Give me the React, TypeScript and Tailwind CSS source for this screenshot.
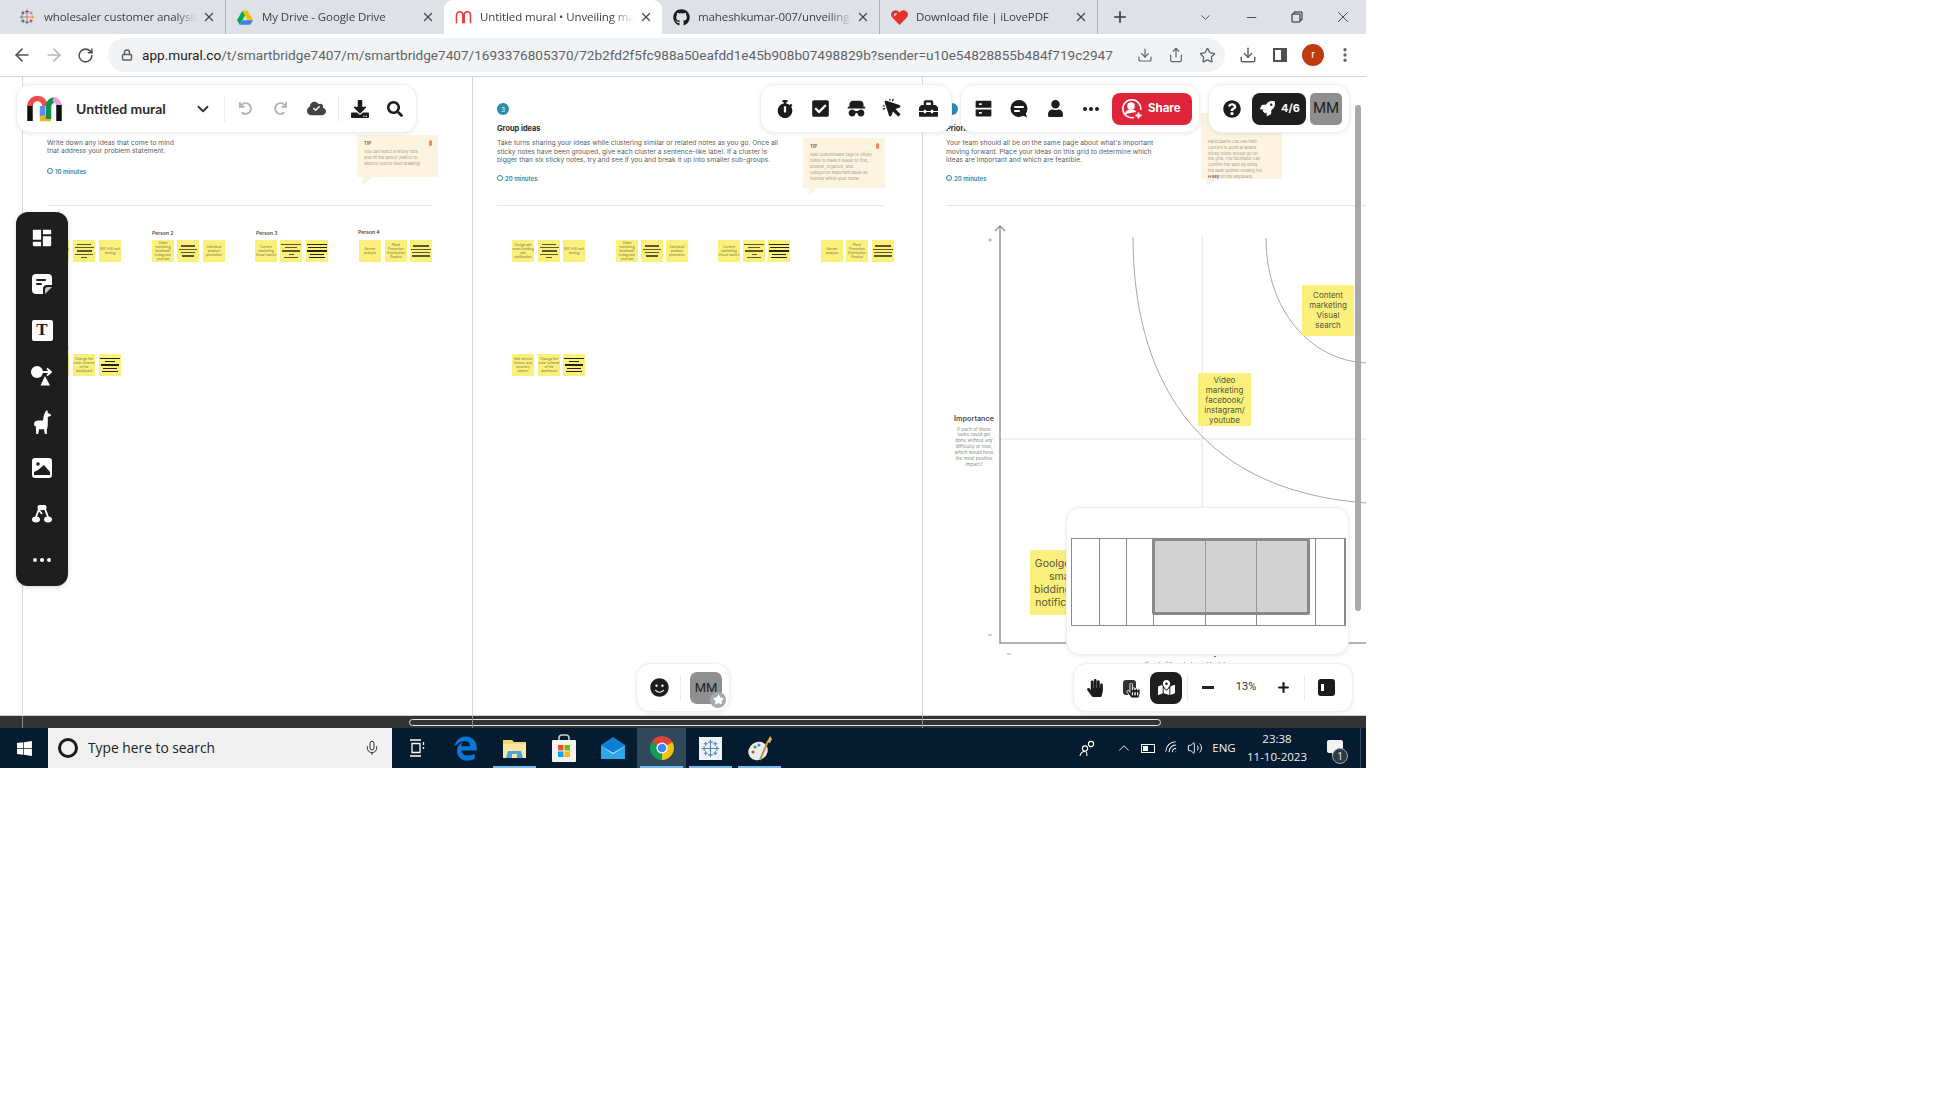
import {
  ArrowLeft,
  ArrowRight,
  RotateCw,
  Lock,
  Star,
  Share,
  Download,
  EllipsisVertical,
  ChevronDown,
  Minus,
  X,
  Plus,
  Mic,
  ChevronUp,
  Volume2,
  Wifi,
} from "lucide-react";
import {
  FaStopwatch,
  FaCheckSquare,
  FaToolbox,
  FaUser,
  FaQuestionCircle,
  FaRocket,
  FaHandPaper,
  FaHandPointer,
  FaMapMarkedAlt,
  FaSmile,
  FaStar,
  FaSearch,
  FaGithub,
  FaWindows,
  FaUndo,
  FaRedo,
  FaCloud,
  FaCheck,
  FaDownload,
  FaCommentAlt,
} from "react-icons/fa";
import { FaEdgeLegacy } from "react-icons/fa6";
import { PiCursorClickFill } from "react-icons/pi";
import { RiSpyFill, RiServerFill, RiLayoutMasonryFill } from "react-icons/ri";

const URL_TEXT =
  "/t/smartbridge7407/m/smartbridge7407/1693376805370/72b2fd2f5fc988a50eafdd1e45b908b07498829b?sender=u10e54828855b484f719c2947";

function TableauMark({ size = 16, tone }: { size?: number; tone?: string }) {
  const crosses = [
    [12, 12, 5, "#e8762d"],
    [12, 4, 3, "#c72035"],
    [12, 20, 3, "#5b6591"],
    [4, 12, 3, "#59879b"],
    [20, 12, 3, "#eb912b"],
    [6, 6, 2.5, "#1f457e"],
    [18, 6, 2.5, "#7099a6"],
    [6, 18, 2.5, "#1f457e"],
    [18, 18, 2.5, "#c72035"],
  ] as const;
  return (
    <svg width={size} height={size} viewBox="0 0 24 24">
      {crosses.map(([x, y, r, c], i) => (
        <path key={i} d={`M${x - r} ${y}H${x + r}M${x} ${y - r}V${y + r}`} stroke={tone ?? c} strokeWidth="1.4" />
      ))}
    </svg>
  );
}

function DriveMark() {
  return (
    <svg width="16" height="15" viewBox="0 0 24 22">
      <path d="M8 1h8l8 14h-8z" fill="#fbbc04" />
      <path d="M8 1L0 15l4 7 8-14z" fill="#00a94f" />
      <path d="M4 22h16l4-7H8z" fill="#3f7ee8" />
    </svg>
  );
}

function MuralFavicon() {
  return (
    <svg width="17" height="14" viewBox="0 0 24 20" fill="none" stroke="#e2403f" strokeWidth="2.2">
      <path d="M2 19V7a4.5 4.5 0 0 1 9 0v11h2V7a4.5 4.5 0 0 1 9 0v12" />
    </svg>
  );
}

function PdfHeart() {
  return (
    <svg width="17" height="15" viewBox="0 0 17 15">
      <path d="M8.5 15L1.2 7.6C-.6 5.6-.2 2.4 2 1c2.200-1.300 4.800-.6 6.500 1.500C10.200.4 12.800-.3 15 1c2.200 1.400 2.600 4.600.8 6.600z" fill="#e5322d" />
      <path d="M3 3.500h3.500l-3.200 3z" fill="#fff" opacity=".85" />
    </svg>
  );
}

function MuralLogo() {
  return (
    <svg width="36" height="27" viewBox="0 0 36 27" fill="none" strokeWidth="5.5">
      <path d="M3 26V10" stroke="#111" />
      <path d="M3 11a7.5 7.5 0 0 1 15 0" stroke="#ee4a50" />
      <path d="M15.500 11V23" stroke="#5b8def" />
      <path d="M13 23.500H24" stroke="#f5b225" />
      <path d="M21.500 24V11a5 6.500 0 0 1 7-5" stroke="#10924d" />
      <path d="M26 4.500a6.500 7 0 0 1 6 6.500" stroke="#e79be8" />
      <path d="M32 10V26" stroke="#111" />
    </svg>
  );
}

function ChromeLogo({ size = 24 }: { size?: number }) {
  return (
    <svg width={size} height={size} viewBox="-12 -12 24 24">
      <path d="M0 0L-10.390 -6A12 12 0 0 1 10.390 -6Z" fill="#db4437" />
      <path d="M0 0L10.390 -6A12 12 0 0 1 0 12Z" fill="#f4c20d" />
      <path d="M0 0L0 12A12 12 0 0 1 -10.390 -6Z" fill="#0f9d58" />
      <circle r="5.600" fill="#fff" />
      <circle r="4.300" fill="#4285f4" />
    </svg>
  );
}

function StoreIcon() {
  return (
    <svg width="24" height="28" viewBox="0 0 24 28">
      <path d="M7 8V4a3 3 0 0 1 3-3h4a3 3 0 0 1 3 3v4" fill="none" stroke="#c9ced3" strokeWidth="1.6" />
      <rect y="6" width="24" height="22" rx="1" fill="#f4f4f4" />
      <rect x="6" y="11" width="5.500" height="5.500" fill="#f25022" />
      <rect x="12.500" y="11" width="5.500" height="5.500" fill="#7fba00" />
      <rect x="6" y="17.500" width="5.500" height="5.500" fill="#00a4ef" />
      <rect x="12.500" y="17.500" width="5.500" height="5.500" fill="#ffb900" />
    </svg>
  );
}

function MailIcon() {
  return (
    <svg width="24" height="22" viewBox="0 0 24 22">
      <path d="M0 8L12 0l12 8v14H0z" fill="#0f7fd6" />
      <path d="M0 8l12 8 12-8v14H0z" fill="#2ba7ea" />
      <path d="M0 9l12 7 12-7-12 8z" fill="#fff" />
    </svg>
  );
}

function ExplorerIcon() {
  return (
    <svg width="23" height="19" viewBox="0 0 23 19">
      <path d="M0 1h9l2 2h12v16H0z" fill="#f3d673" />
      <path d="M0 5h23v14H0z" fill="#fbe6a2" />
      <path d="M5 12h13l2 7H3z" fill="#4da3da" />
      <path d="M9 15h5v4H9z" fill="#fbe6a2" />
    </svg>
  );
}

function PaintIcon() {
  return (
    <svg width="24" height="27" viewBox="0 0 24 27">
      <ellipse cx="10" cy="16" rx="10" ry="9" fill="#e9edf0" transform="rotate(-35 10 16)" />
      <circle cx="5" cy="17" r="1.600" fill="#d0473d" />
      <circle cx="7" cy="12" r="1.600" fill="#3aa14a" />
      <circle cx="11" cy="10" r="1.600" fill="#3b8ee0" />
      <path d="M12 25L20 6" stroke="#c6923f" strokeWidth="2" />
      <path d="M19 7l3-6 2 3-2 4z" fill="#e3b35a" />
    </svg>
  );
}

function StickyIcon() {
  return (
    <svg width="20" height="20" viewBox="0 0 20 20">
      <path d="M4 0h12a4 4 0 0 1 4 4v7h-5a4 4 0 0 0-4 4v5H4a4 4 0 0 1-4-4V4a4 4 0 0 1 4-4z" fill="#fff" />
      <path d="M13 20v-4a3 3 0 0 1 3-3h4z" fill="#fff" opacity=".75" />
      <rect x="4" y="5" width="10" height="2" rx="1" fill="#1e1e1e" />
      <rect x="4" y="9" width="6" height="2" rx="1" fill="#1e1e1e" />
    </svg>
  );
}

function ShapesIcon() {
  return (
    <svg width="22" height="20" viewBox="0 0 22 20" fill="#fff">
      <circle cx="6" cy="6" r="6" />
      <path d="M9.500 19.500L14 10l5 9.500z" />
      <path d="M11 6h8M16 2.500L20 6l-4 3.500" fill="none" stroke="#fff" strokeWidth="1.8" />
    </svg>
  );
}

function LlamaIcon() {
  return (
    <svg width="19" height="24" viewBox="0 0 19 25" fill="#fff">
      <path d="M13 1L14.500 0L15 3L18 4.500L18.500 6L15 7.200L15 15C15 17 14.500 19 14 20L14 25L12 25L11 20L6 20L5 25L3 25L2.500 17C1 17 0.200 15 1 13C2 11 5 11 7 11L10 11L11 5Z" />
    </svg>
  );
}

function ImageIcon() {
  return (
    <svg width="20" height="20" viewBox="0 0 20 20">
      <rect width="20" height="20" rx="3" fill="#fff" />
      <circle cx="6" cy="6" r="1.800" fill="#1e1e1e" />
      <path d="M2 17v-3l4-2 6-5 6 7v3z" fill="#1e1e1e" />
    </svg>
  );
}

function DiagramIcon() {
  return (
    <svg width="20" height="18" viewBox="0 0 20 18" fill="#fff">
      <rect x="5.500" y="0" width="9" height="5" rx="2" />
      <path d="M7 4L4 12M13 4l3 8M7 5l3 4" stroke="#fff" strokeWidth="1.8" />
      <ellipse cx="4" cy="14.500" rx="4" ry="3" />
      <ellipse cx="16" cy="14.500" rx="4" ry="3" />
    </svg>
  );
}

function ChatIcon() {
  return (
    <svg width="18" height="18" viewBox="0 0 18 18">
      <circle cx="9" cy="8.500" r="8.500" fill="#1c1c1c" />
      <path d="M12 15l5 2.500-1.500-5z" fill="#1c1c1c" />
      <rect x="4" y="6" width="10" height="2" rx="1" fill="#fff" />
      <rect x="4" y="10" width="6" height="2" rx="1" fill="#fff" />
    </svg>
  );
}

function ShareIcon() {
  return (
    <svg width="22" height="22" viewBox="0 0 22 22" fill="none" stroke="#fff" strokeWidth="1.5">
      <path d="M13 19.500A9 9 0 1 1 19.700 12" />
      <circle cx="10" cy="8" r="3" fill="#fff" />
      <path d="M4.500 16c1-3 3-4 5.500-4s3.500.5 4.500 2" fill="#fff" />
      <path d="M17.500 14.500v6M14.500 17.500h6" strokeWidth="1.8" />
    </svg>
  );
}

function ToolDot() {
  return (
    <div className="flex gap-[2px]">
      <div className="w-[4px] h-[4px] rounded-full bg-[#1c1c1c]" />
      <div className="w-[4px] h-[4px] rounded-full bg-[#1c1c1c]" />
      <div className="w-[4px] h-[4px] rounded-full bg-[#1c1c1c]" />
    </div>
  );
}

const TABS = [
  { title: "wholesaler customer analysis", icon: <TableauMark />, sep: true },
  { title: "My Drive - Google Drive", icon: <DriveMark />, sep: false },
  { title: "Untitled mural • Unveiling market", icon: <MuralFavicon />, active: true, sep: false },
  { title: "maheshkumar-007/unveiling-market", icon: <FaGithub className="text-[17px] text-[#1c1c1c]" />, sep: true },
  { title: "Download file | iLovePDF", icon: <PdfHeart />, sep: true },
];

function TabStrip() {
  return (
    <div className="h-[34px] bg-[#dee1e6] flex items-end pl-[8px] font-['Open_Sans',sans-serif] text-[11.5px] text-[#3c4043]">
      {TABS.map((t) => (
        <div
          key={t.title}
          className={`w-[218px] h-[34px] flex items-center pl-[10px] pr-[9px] ${
            t.active ? "bg-white rounded-t-[9px]" : t.sep ? "border-r border-[#9aa0a6]/70" : ""
          }`}
        >
          <div className="w-[18px] flex justify-center shrink-0">{t.icon}</div>
          <div className="ml-[8px] w-[154px] overflow-hidden whitespace-nowrap tracking-[-0.1px] [mask-image:linear-gradient(to_right,black_85%,transparent)]">
            {t.title}
          </div>
          <X size={14} strokeWidth={2.2} className="ml-auto shrink-0 text-[#45484c]" />
        </div>
      ))}
      <div className="w-[44px] h-[34px] flex items-center justify-center">
        <Plus size={18} strokeWidth={2.2} className="text-[#3c4043]" />
      </div>
      <div className="flex-1 h-[34px] flex items-center justify-end text-[#3c4043]">
        <ChevronDown size={15} strokeWidth={1.4} className="mr-[31px]" />
        <Minus size={15} strokeWidth={1.4} className="mr-[32px]" />
        <svg width="12" height="12" viewBox="0 0 12 12" fill="none" stroke="#202124" className="mr-[31px]">
          <path d="M3 3V1h8v8H9M1 3h8v8H1z" />
        </svg>
        <X size={18} strokeWidth={1.2} className="mr-[14px]" />
      </div>
    </div>
  );
}

function AddressBar() {
  return (
    <div className="h-[43px] bg-white border-b border-[#d5d7db] flex items-center font-['Roboto',sans-serif] text-[#5f6368]">
      <div className="w-[108px] flex items-center pl-[12px] gap-[12px] shrink-0">
        <ArrowLeft size={20} strokeWidth={2} className="text-[#4d5156]" />
        <ArrowRight size={20} strokeWidth={2} className="text-[#b4b7bb]" />
        <RotateCw size={17} strokeWidth={2.2} className="ml-[1px] text-[#4d5156]" />
      </div>
      <div className="w-[1117px] h-[34px] rounded-full bg-[#f1f3f4] flex items-center pl-[13px] shrink-0">
        <Lock size={12} strokeWidth={3} className="text-[#5f6368]" />
        <div className="ml-[9px] w-[975px] whitespace-nowrap overflow-hidden text-[13.6px]">
          <span className="text-[#202124]">app.mural.co</span>
          {URL_TEXT}
        </div>
        <div className="ml-auto flex items-center gap-[15px] pr-[9px]">
          <Download size={16} strokeWidth={1.8} />
          <Share size={16} strokeWidth={1.8} />
          <Star size={17} strokeWidth={1.8} />
        </div>
      </div>
      <div className="flex-1 flex items-center pl-[14px]">
        <Download size={18} strokeWidth={2} />
        <div className="ml-[16px] w-[14px] h-[14px] border-[2px] border-[#4d5156] border-r-[6px]" />
        <div className="ml-[15px] w-[22px] h-[22px] rounded-full bg-[#bf3a0d] text-white text-[11px] flex items-center justify-center">
          r
        </div>
        <EllipsisVertical size={18} strokeWidth={2.4} className="ml-[12px]" />
      </div>
    </div>
  );
}

type StickyProps = {
  x: number;
  y: number;
  text?: string;
  lines?: number[];
  dark?: boolean;
};

function Sticky({ x, y, text, lines, dark }: StickyProps) {
  return (
    <div
      className="absolute w-[22px] h-[22px] bg-[#fbf07c] flex flex-col items-center justify-center text-center text-[3.3px] leading-[4px] text-[#77764a] overflow-hidden"
      style={{ left: x, top: y - 77 }}
    >
      {text}
      {lines && (
        <div className="flex flex-col items-center gap-[2px]">
          {lines.map((w, i) => (
            <div
              key={i}
              className={dark ? "h-[1.4px] bg-[#24230f]" : "h-[1.3px] bg-[#5b5a2e]"}
              style={{ width: w }}
            />
          ))}
        </div>
      )}
    </div>
  );
}

// the note contents repeat between the first two sections
const L_A = [14, 19, 15, 18, 6];
const L_B = [14, 18, 14, 12];
const L_C = [20, 12, 18, 5, 14];
const L_D = [20, 19, 20, 14, 16];
const L_E = [16, 20, 18, 18];
const L_F = [20, 10, 18, 14, 16];

const SEO = "SEO A/B split testing";
const VIDEO = "Video marketing facebook/ instagram/ youtube";
const INDIVIDUAL = "Individual product promotion";
const CONTENT = "Content marketing Visual search";
const BANNER = "Banner analysis";
const PLACE = "Place Promotion Distribution Product";
const GOOGLE = "Goolge ads smart bidding ads notification";
const HISTORY = "Add version history and recovery options";
const COLOR = "Change the color scheme of the dashboard";

function stickyRow(xs: number[], y: number): StickyProps[] {
  const c: Omit<StickyProps, "x" | "y">[] = [
    { text: GOOGLE },
    { lines: L_A },
    { text: SEO },
    { text: VIDEO },
    { lines: L_B },
    { text: INDIVIDUAL },
    { text: CONTENT },
    { lines: L_C },
    { lines: L_D, dark: true },
    { text: BANNER },
    { text: PLACE },
    { lines: L_E },
  ];
  return xs.map((x, i) => ({ ...c[i], x, y }));
}

const COLS_1 = [47, 73, 99, 152, 177, 203, 255, 280, 306, 359, 385, 410];
const COLS_2 = [512, 538, 563, 616, 641, 666, 718, 743, 768, 821, 846, 872];

const STICKIES: StickyProps[] = [
  ...stickyRow(COLS_1, 240),
  ...stickyRow(COLS_2, 240),
  { x: 47, y: 354, text: HISTORY },
  { x: 73, y: 354, text: COLOR },
  { x: 99, y: 354, lines: L_F, dark: true },
  { x: 512, y: 354, text: HISTORY },
  { x: 538, y: 354, text: COLOR },
  { x: 563, y: 354, lines: L_F, dark: true },
];

const PERSONS = [
  { name: "Person 1", x: 47, y: 233 },
  { name: "Person 2", x: 152, y: 233 },
  { name: "Person 3", x: 256, y: 233 },
  { name: "Person 4", x: 358, y: 232 },
  { name: "Person 5", x: 47, y: 347 },
];

function Duration({ label, x }: { label: string; x: number }) {
  return (
    <div
      className="absolute h-[8px] flex items-center gap-[2px] text-[6px] font-semibold text-[#2a8bab] whitespace-nowrap"
      style={{ left: x, top: label === "10 minutes" ? 90 : 97 }}
    >
      <span className="w-[6px] h-[6px] rounded-full border border-[#2a8bab]" />
      {label}
    </div>
  );
}

function Tip({ x, y, w, h, lines }: { x: number; y: number; w: number; h: number; lines: React.ReactNode[] }) {
  return (
    <div
      className="absolute bg-[#fdf3df] pl-[7px] pt-[6px] text-[#a09a8b]"
      style={{ left: x, top: y - 77, width: w, height: h }}
    >
      <div className="text-[4.4px] leading-[5px] font-bold text-[#6d675a]">TIP</div>
      <div className="absolute right-[6px] top-[5px] w-[3.5px] h-[5.5px] rounded-full bg-[#f0885a]" />
      <div className="mt-[3px] text-[4.1px] leading-[5.9px] whitespace-nowrap">
        {lines.map((l, i) => (
          <div key={i} className="h-[5.9px]">{l}</div>
        ))}
      </div>
      <div className="absolute left-[6px] top-full w-0 h-0 border-t-[8px] border-t-[#fdf3df] border-r-[9px] border-r-transparent" />
    </div>
  );
}

function BigSticky({ className, lines, textClass }: { className: string; lines: string[]; textClass: string }) {
  return (
    <div className={`absolute bg-[#fbf07c] flex flex-col items-center justify-center text-center text-[#55553a] whitespace-nowrap ${className} ${textClass}`}>
      {lines.map((l) => (
        <div key={l}>{l}</div>
      ))}
    </div>
  );
}

function Mural() {
  return (
    <div className="relative flex-1 bg-white overflow-hidden font-['Inter',sans-serif]">
      {/* section dividers */}
      <div className="absolute left-[22px] top-0 bottom-0 w-px bg-[#d8d8d8]" />
      <div className="absolute left-[472px] top-0 bottom-0 w-px bg-[#d8d8d8]" />
      <div className="absolute left-[922px] top-0 bottom-0 w-px bg-[#d8d8d8]" />
      <div className="absolute left-[47px] top-[128px] w-[386px] h-px bg-[#e6e6e6]" />
      <div className="absolute left-[497px] top-[128px] w-[386px] h-px bg-[#e6e6e6]" />
      <div className="absolute left-[946px] top-[128px] w-[420px] h-px bg-[#e6e6e6]" />

      {/* section 1 */}
      <div className="absolute left-[47px] top-[62px] text-[6.7px] leading-[8.3px] text-[#5e5e5e] whitespace-nowrap">
        <div>Write down any ideas that come to mind</div>
        <div>that address your problem statement.</div>
      </div>
      <Duration label="10 minutes" x={47} />
      <Tip
        x={357}
        y={135}
        w={81}
        h={42}
        lines={["You can select a sticky note", "and hit the pencil (switch to", "sketch) icon to start drawing!"]}
      />

      {/* section 2 */}
      <div className="absolute left-[497px] top-[26px] w-[12px] h-[12px] rounded-full bg-[#2b8cab] text-white text-[6px] flex items-center justify-center">
        3
      </div>
      <div className="absolute left-[497px] top-[47px] text-[7.4px] leading-[9px] font-bold text-[#2b2b2b]">
        Group ideas
      </div>
      <div className="absolute left-[497px] top-[62px] text-[6.7px] leading-[8.5px] text-[#5e5e5e] whitespace-nowrap">
        <div>Take turns sharing your ideas while clustering similar or related notes as you go. Once all</div>
        <div>sticky notes have been grouped, give each cluster a sentence-like label. If a cluster is</div>
        <div>bigger than six sticky notes, try and see if you and break it up into smaller sub-groups.</div>
      </div>
      <Duration label="20 minutes" x={497} />
      <Tip
        x={803}
        y={138}
        w={82}
        h={50}
        lines={[
          "Add customizable tags to sticky",
          "notes to make it easier to find,",
          "browse, organize, and",
          "categorize important ideas as",
          "themes within your mural.",
        ]}
      />

      {/* section 3 */}
      <div className="absolute left-[946px] top-[26px] w-[12px] h-[12px] rounded-full bg-[#2b8cab]" />
      <div className="absolute left-[946px] top-[47px] text-[7.4px] leading-[9px] font-bold text-[#2b2b2b]">
        Prioritize ideas
      </div>
      <div className="absolute left-[946px] top-[62px] text-[6.7px] leading-[8.5px] text-[#5e5e5e] whitespace-nowrap">
        <div>Your team should all be on the same page about what's important</div>
        <div>moving forward. Place your ideas on this grid to determine which</div>
        <div>ideas are important and which are feasible.</div>
      </div>
      <Duration label="20 minutes" x={946} />
      <Tip
        x={1201}
        y={113}
        w={81}
        h={66}
        lines={[
          "",
          "",
          "Participants can use their",
          "cursors to point at where",
          "sticky notes should go on",
          "the grid. The facilitator can",
          "confirm the spot by using",
          "the laser pointer holding the",
          <span key="h">
            <b className="text-[#6d675a]">H key</b> on the keyboard.
          </span>,
        ]}
      />

      {/* prioritisation chart */}
      <svg className="absolute left-0 top-0" width="1366" height="651" viewBox="0 77 1366 651" fill="none">
        <path d="M1202 236V640M1000 439H1366" stroke="#e4e4e4" />
        <path d="M1133 237C1133 370 1190 490 1366 503M1266 238C1266 310 1310 360 1366 363" stroke="#a9a9a9" />
        <path d="M1000 226V643H1366M995 231L1000 226L1005 231" stroke="#9a9a9a" strokeWidth="1.5" />
        <path d="M988 240h4M990 238v4M988 635h4M1007 654h4" stroke="#a9a9a9" />
        <path d="M1214 656.500h2" stroke="#777" />
      </svg>
      <div className="absolute left-[950px] top-[336px] w-[48px] text-center">
        <div className="text-[7.2px] leading-[12px] font-semibold text-[#4c4c4c]">Importance</div>
        <div className="mt-[1.5px] text-[4.6px] leading-[5.9px] text-[#8c8c8c] whitespace-nowrap">
          <div>If each of these</div>
          <div>tasks could get</div>
          <div>done without any</div>
          <div>difficulty or cost,</div>
          <div>which would have</div>
          <div>the most positive</div>
          <div>impact?</div>
        </div>
      </div>
      <div className="absolute left-[1145px] top-[584px] text-[5px] font-semibold text-[#6e6e6e] whitespace-nowrap">
        If each of these tasks could get done
      </div>
      <BigSticky
        className="left-[1302px] top-[208px] w-[52px] h-[51px] pb-[2px]"
        textClass="text-[8px] leading-[10px]"
        lines={["Content", "marketing", "Visual", "search"]}
      />
      <BigSticky
        className="left-[1198px] top-[296px] w-[53px] h-[53px]"
        textClass="text-[8px] leading-[10px]"
        lines={["Video", "marketing", "facebook/", "instagram/", "youtube"]}
      />
      <BigSticky
        className="left-[1030px] top-[473px] w-[66px] h-[65px]"
        textClass="text-[10.5px] leading-[13px]"
        lines={["Goolge ads", "smart", "bidding ads", "notification"]}
      />

      {/* tiny notes */}
      {PERSONS.map((p) => (
        <div
          key={p.name}
          className="absolute text-[5px] leading-[6px] font-semibold text-[#4c4c4c] whitespace-nowrap"
          style={{ left: p.x, top: p.y - 80 }}
        >
          {p.name}
        </div>
      ))}
      {STICKIES.map((s) => (
        <Sticky key={`${s.x}-${s.y}`} {...s} />
      ))}

      {/* page scrollbars */}
      <div className="absolute left-[1355px] top-[28px] w-[6px] h-[506px] rounded-full bg-[#a8a8a8]" />
      <div className="absolute left-0 right-0 bottom-0 h-[13px] bg-[#333] border-t border-[#cfcfcf] flex items-center">
        <div className="ml-[409px] w-[752px] h-[7px] rounded-full border border-[#e4e4e4]" />
      </div>
      <div className="absolute left-[22px] bottom-0 w-px h-[12px] bg-[#8a8a8a]" />
      <div className="absolute left-[472px] bottom-0 w-px h-[12px] bg-[#8a8a8a]" />
      <div className="absolute left-[922px] bottom-0 w-px h-[12px] bg-[#8a8a8a]" />

      <Toolbars />
    </div>
  );
}

const CARD = "absolute bg-white rounded-[14px] border border-[#f0f0f0] shadow-[0_1px_4px_rgba(0,0,0,0.08)] flex items-center";

function Cell({ children, w = 36 }: { children: React.ReactNode; w?: number }) {
  return (
    <div className="h-[32px] flex items-center justify-center shrink-0 text-[#1c1c1c]" style={{ width: w }}>
      {children}
    </div>
  );
}

function Toolbars() {
  return (
    <>
      {/* title card */}
      <div className={`${CARD} left-[16px] top-[7px] w-[401px] h-[49px] pl-[10px]`}>
        <MuralLogo />
        <div className="ml-[13px] w-[118px] text-[14px] font-bold text-[#2c2c2c] whitespace-nowrap font-['Lato',sans-serif]">
          Untitled mural
        </div>
        <ChevronDown size={18} strokeWidth={2.4} className="text-[#333]" />
        <div className="ml-[12px] w-px h-[26px] bg-[#ececec]" />
        <div className="ml-[2px] w-[36px] flex justify-center text-[#b3b3b3]">
          <FaUndo size={13} />
        </div>
        <div className="w-[35px] flex justify-center text-[#b3b3b3]">
          <FaRedo size={13} />
        </div>
        <div className="w-[37px] flex justify-center relative text-[#444]">
          <FaCloud size={19} />
          <FaCheck size={7} className="absolute top-[6px] text-white" />
        </div>
        <div className="ml-[3px] w-px h-[26px] bg-[#ececec]" />
        <Cell w={41}>
          <FaDownload size={18} />
        </Cell>
        <Cell w={30}>
          <FaSearch size={16} />
        </Cell>
      </div>

      {/* tools */}
      <div className={`${CARD} left-[760px] top-[7px] w-[192px] h-[49px] pl-[5.5px]`}>
        <Cell>
          <FaStopwatch size={18} />
        </Cell>
        <Cell>
          <FaCheckSquare size={19} />
        </Cell>
        <Cell>
          <RiSpyFill size={21} />
        </Cell>
        <Cell>
          <PiCursorClickFill size={21} />
        </Cell>
        <Cell>
          <FaToolbox size={19} />
        </Cell>
      </div>

      {/* collaboration */}
      <div className={`${CARD} left-[960px] top-[7px] w-[240px] h-[49px] pl-[4px]`}>
        <Cell>
          <RiServerFill size={21} />
        </Cell>
        <Cell>
          <ChatIcon />
        </Cell>
        <Cell>
          <FaUser size={17} />
        </Cell>
        <Cell>
          <ToolDot />
        </Cell>
        <div className="ml-[3px] w-[80px] h-[32px] rounded-lg bg-[#e0243a] flex items-center pl-[9px] gap-[5px] text-white text-[11.5px] font-bold">
          <ShareIcon />
          Share
        </div>
      </div>

      {/* account */}
      <div className={`${CARD} left-[1208px] top-[7px] w-[142px] h-[49px] pl-[5px]`}>
        <Cell>
          <FaQuestionCircle size={18} />
        </Cell>
        <div className="ml-[2px] w-[54px] h-[32px] rounded-lg bg-[#1e1e1e] flex items-center pl-[8px] gap-[6px] text-white text-[11px] font-bold">
          <FaRocket size={15} />
          4/6
        </div>
        <div className="ml-[4px] w-[32px] h-[32px] rounded-[5px] bg-[#8f8f8f] flex items-center justify-center text-[15px] text-[#222] font-['Roboto',sans-serif]">
          MM
        </div>
      </div>

      {/* creation rail */}
      <div className="absolute left-[16px] top-[135px] w-[52px] h-[374px] rounded-[12px] bg-[#1e1e1e] pt-[3px] flex flex-col items-center text-white shadow-[0_1px_4px_rgba(0,0,0,0.15)]">
        <RailCell>
          <RiLayoutMasonryFill size={22} />
        </RailCell>
        <RailCell>
          <StickyIcon />
        </RailCell>
        <RailCell>
          <div className="w-[21px] h-[21px] bg-white rounded-[2px] flex items-center justify-center text-[#1e1e1e] text-[17px] font-bold font-['Liberation_Serif',serif]">
            T
          </div>
        </RailCell>
        <RailCell>
          <ShapesIcon />
        </RailCell>
        <RailCell>
          <LlamaIcon />
        </RailCell>
        <RailCell>
          <ImageIcon />
        </RailCell>
        <RailCell>
          <DiagramIcon />
        </RailCell>
        <RailCell>
          <div className="flex gap-[3px]">
            <div className="w-[4px] h-[4px] rounded-full bg-white" />
            <div className="w-[4px] h-[4px] rounded-full bg-white" />
            <div className="w-[4px] h-[4px] rounded-full bg-white" />
          </div>
        </RailCell>
      </div>

      {/* minimap */}
      <div className={`${CARD} left-[1066px] top-[430px] w-[283px] h-[148px] justify-center`}>
        <div className="relative ml-[2px] mt-[2px] w-[275px] h-[88px] flex border-[1.5px] border-[#8a8a8a]">
          {[28, 27, 28, 52, 51, 60, 29].map((w, i) => (
            <div key={i} className="h-full border-r-[1.5px] last:border-r-0 border-[#8a8a8a]" style={{ width: w }} />
          ))}
          <div className="absolute left-[80px] -top-px w-[158px] h-[77px] rounded-[2px] border-[3px] border-[#8a8a8a] bg-[#a6a6a6]/50" />
        </div>
      </div>

      {/* reactions */}
      <div className={`${CARD} left-[636px] top-[586px] w-[94px] h-[49px] pl-[13px]`}>
        <FaSmile size={19} className="text-[#1c1c1c]" />
        <div className="ml-[11px] w-px h-[26px] bg-[#ececec]" />
        <div className="relative ml-[9px] w-[32px] h-[32px] rounded-[7px] bg-[#8f8f8f] flex items-center justify-center text-[13px] text-[#222] font-['Roboto',sans-serif]">
          MM
          <div className="absolute -right-[4px] -bottom-[4px] w-[16px] h-[16px] rounded-full bg-[#a9a9a9] flex items-center justify-center">
            <FaStar size={11} className="text-white" />
          </div>
        </div>
      </div>

      {/* zoom bar */}
      <div className={`${CARD} left-[1073px] top-[586px] w-[280px] h-[49px] pl-[3px]`}>
        <Cell>
          <FaHandPaper size={18} />
        </Cell>
        <Cell>
          <div className="relative -ml-[3px]">
            <div className="w-[13px] h-[15px] rounded-[3px] bg-[#333]" />
            <FaHandPointer size={15} stroke="#fff" strokeWidth={30} className="absolute left-[3px] top-[3px] text-[#1c1c1c]" />
          </div>
        </Cell>
        <div className="ml-[1px] w-[32px] h-[32px] rounded-lg bg-[#1e1e1e] flex items-center justify-center text-white">
          <FaMapMarkedAlt size={17} />
        </div>
        <div className="ml-[5px] w-px h-[26px] bg-[#ececec]" />
        <Cell w={40}>
          <div className="w-[12px] h-[3px] bg-[#222]" />
        </Cell>
        <Cell w={36}>
          <span className="text-[11px] font-['Roboto',sans-serif] text-[#333]">13%</span>
        </Cell>
        <Cell w={38}>
          <Plus size={15} strokeWidth={3.5} />
        </Cell>
        <div className="ml-[2px] w-px h-[26px] bg-[#ececec]" />
        <div className="ml-[13px] w-[17px] h-[17px] rounded-[3px] bg-[#1c1c1c] flex items-center pl-[3px]">
          <div className="w-[3px] h-[7px] bg-white" />
        </div>
      </div>
    </>
  );
}

function RailCell({ children }: { children: React.ReactNode }) {
  return <div className="h-[46px] w-full flex items-center justify-center shrink-0">{children}</div>;
}

function TaskApp({ children, active, bar }: { children: React.ReactNode; active?: boolean; bar?: boolean }) {
  return (
    <div className={`relative w-[49px] h-[40px] flex items-center justify-center shrink-0 ${active ? "bg-[#31475a]" : ""}`}>
      {children}
      {bar && <div className="absolute left-[3px] right-[3px] bottom-0 h-[2px] bg-[#76b9ed]" />}
    </div>
  );
}

function Taskbar() {
  return (
    <div className="h-[40px] bg-[#041b30] flex items-center text-white font-['Open_Sans',sans-serif]">
      <div className="w-[48px] flex justify-center shrink-0">
        <FaWindows size={17} />
      </div>
      <div className="w-[344px] h-[40px] bg-[#f0f0f0] flex items-center pl-[10px] text-[#222] shrink-0">
        <div className="w-[20px] h-[20px] rounded-full border-[3px] border-[#1b1b1b] shrink-0" />
        <div className="ml-[10px] text-[13.8px] whitespace-nowrap">Type here to search</div>
        <Mic size={16} strokeWidth={1.5} className="ml-auto mr-[12px] text-[#333]" />
      </div>
      <TaskApp>
        <svg width="16" height="18" viewBox="0 0 16 18" fill="none" stroke="#fff" strokeWidth="1.3">
          <path d="M1 1h11M1 17h11M3 4.500h8v9H3zM14.500 3v3M14.500 8v2" />
        </svg>
      </TaskApp>
      <TaskApp>
        <FaEdgeLegacy size={25} className="text-[#0a78d7]" />
      </TaskApp>
      <TaskApp bar>
        <ExplorerIcon />
      </TaskApp>
      <TaskApp>
        <StoreIcon />
      </TaskApp>
      <TaskApp>
        <MailIcon />
      </TaskApp>
      <TaskApp active bar>
        <ChromeLogo />
      </TaskApp>
      <TaskApp bar>
        <div className="w-[23px] h-[23px] bg-[#eef3f6] flex items-center justify-center">
          <TableauMark size={19} tone="#4f86b5" />
        </div>
      </TaskApp>
      <TaskApp bar>
        <PaintIcon />
      </TaskApp>

      <div className="ml-auto flex items-center h-[40px] text-[#f2f2f2]">
        <div className="w-[30px] flex justify-center">
          <svg width="17" height="17" viewBox="0 0 17 17" fill="none" stroke="#fff" strokeWidth="1.1">
            <circle cx="6" cy="8.500" r="2.600" />
            <circle cx="12" cy="4" r="2.600" />
            <path d="M1 16c.5-3 2-4.500 5-4.500M7 11.500c.8 1 1 3 1 4.500" />
          </svg>
        </div>
        <div className="ml-[10px] w-[24px] flex justify-center">
          <ChevronUp size={18} strokeWidth={1.3} />
        </div>
        <div className="w-[24px] flex justify-center">
          <div className="w-[14px] h-[9px] border border-white p-px">
            <div className="w-[5px] h-full bg-white" />
          </div>
        </div>
        <div className="w-[24px] flex justify-center">
          <Wifi size={16} strokeWidth={1.5} className="-rotate-45 text-white" />
        </div>
        <div className="w-[22px] flex justify-center">
          <Volume2 size={16} strokeWidth={1.4} className="text-white" />
        </div>
        <div className="w-[36px] text-center text-[11.5px]">ENG</div>
        <div className="w-[70px] text-center text-[11.5px] leading-[18px]">
          <div>23:38</div>
          <div>11-10-2023</div>
        </div>
        <div className="relative w-[49px] h-[40px] flex items-center justify-center pr-[3px] border-r border-[#3a4c5c]">
          <FaCommentAlt size={16} />
          <div className="absolute left-[20px] top-[20px] w-[16px] h-[16px] rounded-full bg-[#2d3a45] border border-[#9aa5ad] text-[10px] flex items-center justify-center">
            1
          </div>
        </div>
        <div className="w-[5px]" />
      </div>
    </div>
  );
}

export default function App() {
  return (
    <div className="w-full h-[1106px] bg-white">
      <div className="w-[1366px] h-[768px] flex flex-col overflow-hidden">
        <TabStrip />
        <AddressBar />
        <Mural />
        <Taskbar />
      </div>
    </div>
  );
}
